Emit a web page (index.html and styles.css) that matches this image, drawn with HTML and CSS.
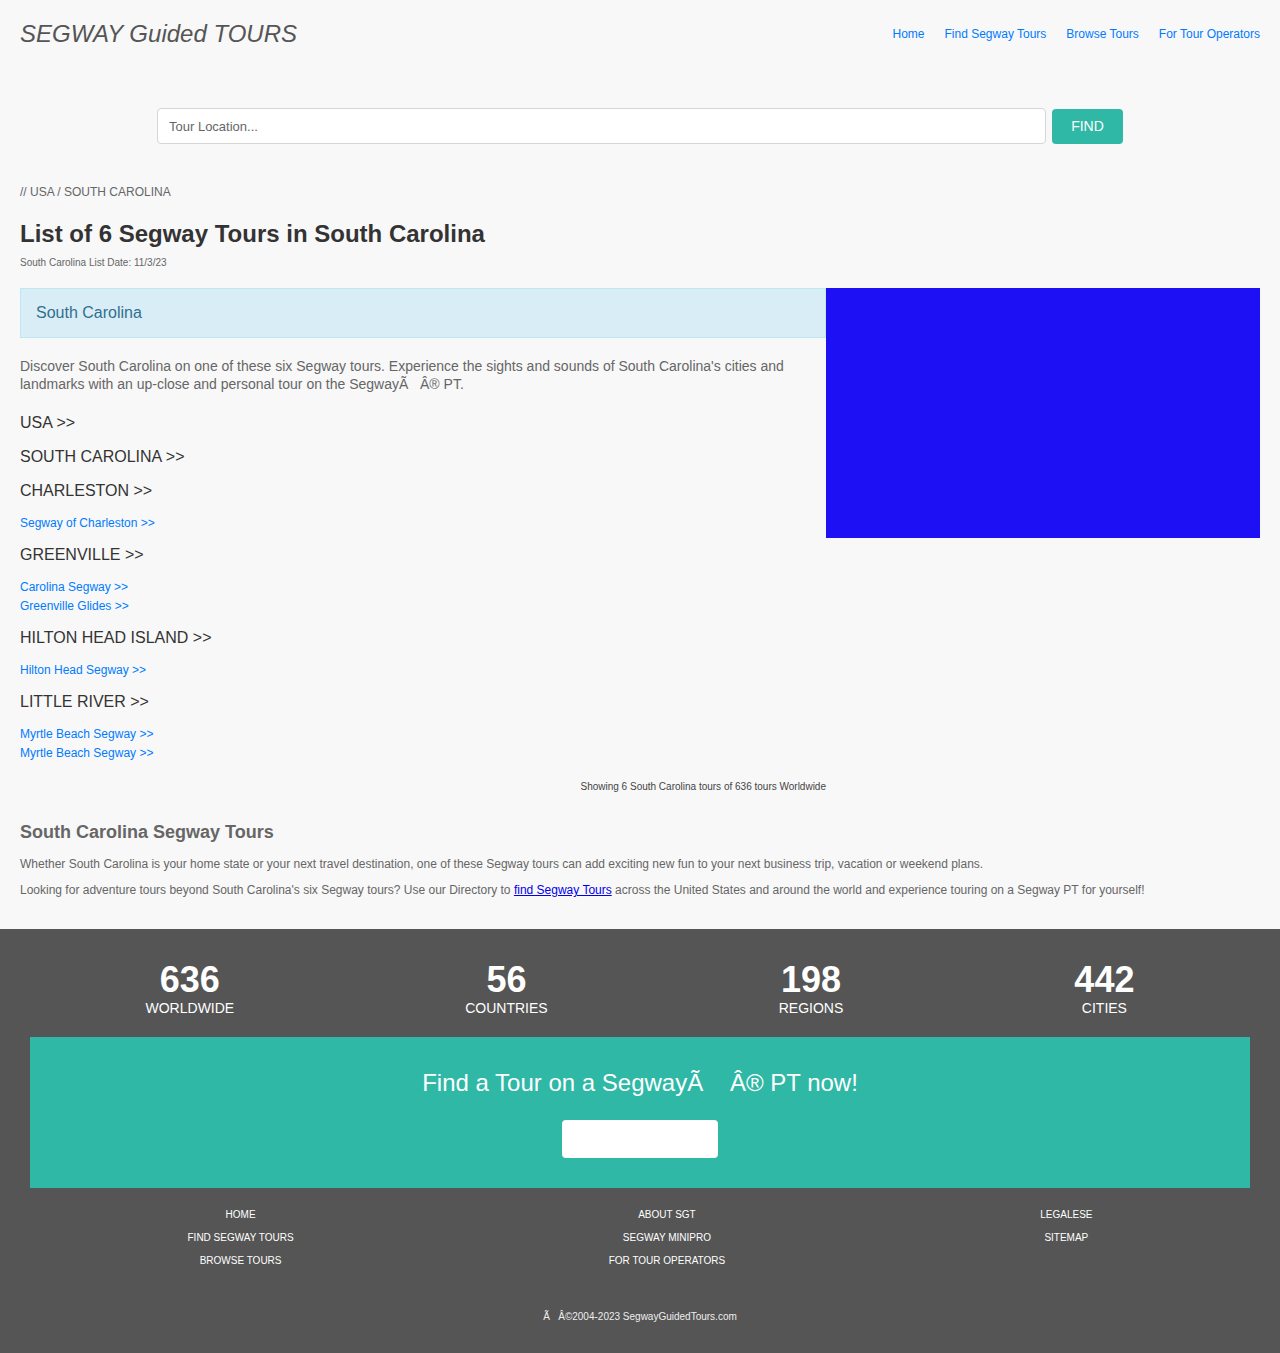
FILE: index.html
```html
<!DOCTYPE html>
<html>
<head>
<meta charset="utf-8">
<title>Segway Tours in South Carolina</title>
<link rel="stylesheet" href="styles.css">
</head>
<body>
<header class="site-header">
  <div class="logo">SEGWAY Guided TOURS</div>
  <nav class="main-nav">
    <a href="#">Home</a>
    <a href="#">Find Segway Tours</a>
    <a href="#">Browse Tours</a>
    <a href="#">For Tour Operators</a>
  </nav>
</header>

<div class="search">
  <input class="search-input" type="text" placeholder="Tour Location...">
  <button class="search-btn">FIND</button>
</div>

<main class="content">
  <div class="breadcrumb">// USA / SOUTH CAROLINA</div>
  <h1 class="title">List of 6 Segway Tours in South Carolina</h1>
  <div class="list-date">South Carolina List Date: 11/3/23</div>

  <div class="row">
    <div class="left-col">
      <div class="alert">South Carolina</div>
      <p class="intro">Discover South Carolina on one of these six Segway tours. Experience the sights and sounds of South Carolina's cities and landmarks with an up-close and personal tour on the SegwayÃ&nbsp;&nbsp;&nbsp;Â® PT.</p>
      <div class="loc">USA &gt;&gt;</div>
      <div class="loc">SOUTH CAROLINA &gt;&gt;</div>
      <div class="loc">CHARLESTON &gt;&gt;</div>
      <ul class="tours">
        <li><a href="#">Segway of Charleston &gt;&gt;</a></li>
      </ul>
      <div class="loc">GREENVILLE &gt;&gt;</div>
      <ul class="tours">
        <li><a href="#">Carolina Segway &gt;&gt;</a></li>
        <li><a href="#">Greenville Glides &gt;&gt;</a></li>
      </ul>
      <div class="loc">HILTON HEAD ISLAND &gt;&gt;</div>
      <ul class="tours">
        <li><a href="#">Hilton Head Segway &gt;&gt;</a></li>
      </ul>
      <div class="loc">LITTLE RIVER &gt;&gt;</div>
      <ul class="tours">
        <li><a href="#">Myrtle Beach Segway &gt;&gt;</a></li>
        <li><a href="#">Myrtle Beach Segway &gt;&gt;</a></li>
      </ul>
      <div class="showing">Showing 6 South Carolina tours of 636 tours Worldwide</div>
    </div>
    <div class="right-col">
      <div class="ad-box"></div>
    </div>
  </div>

  <h2 class="sub-title">South Carolina Segway Tours</h2>
  <p class="body-text">Whether South Carolina is your home state or your next travel destination, one of these Segway tours can add exciting new fun to your next business trip, vacation or weekend plans.</p>
  <p class="body-text">Looking for adventure tours beyond South Carolina's six Segway tours? Use our Directory to <a class="inline-link" href="#">find Segway Tours</a> across the United States and around the world and experience touring on a Segway PT for yourself!</p>
</main>

<footer class="site-footer">
  <div class="stats">
    <div class="stat"><div class="stat-num">636</div><div class="stat-label">WORLDWIDE</div></div>
    <div class="stat"><div class="stat-num">56</div><div class="stat-label">COUNTRIES</div></div>
    <div class="stat"><div class="stat-num">198</div><div class="stat-label">REGIONS</div></div>
    <div class="stat"><div class="stat-num">442</div><div class="stat-label">CITIES</div></div>
  </div>
  <div class="cta">
    <div class="cta-title">Find a Tour on a SegwayÃ&nbsp;&nbsp;&nbsp;&nbsp;Â® PT now!</div>
    <button class="cta-btn"></button>
  </div>
  <div class="foot-links">
    <ul class="foot-col">
      <li><a href="#">HOME</a></li>
      <li><a href="#">FIND SEGWAY TOURS</a></li>
      <li><a href="#">BROWSE TOURS</a></li>
    </ul>
    <ul class="foot-col">
      <li><a href="#">ABOUT SGT</a></li>
      <li><a href="#">SEGWAY MINIPRO</a></li>
      <li><a href="#">FOR TOUR OPERATORS</a></li>
    </ul>
    <ul class="foot-col">
      <li><a href="#">LEGALESE</a></li>
      <li><a href="#">SITEMAP</a></li>
    </ul>
  </div>
  <div class="copyright">Ã&nbsp;&nbsp;&nbsp;Â©2004-2023 SegwayGuidedTours.com</div>
</footer>
</body>
</html>
```

FILE: styles.css
```css
* { box-sizing: border-box; }

body {
  margin: 0;
  background: #f8f8f8;
  font-family: "Liberation Sans", Arial, Helvetica, sans-serif;
  color: #666;
}

a { text-decoration: none; }

.site-header {
  display: flex;
  justify-content: space-between;
  align-items: flex-start;
  padding: 19px 20px 0;
  height: 68px;
}

.logo {
  font-size: 24px;
  font-style: italic;
  color: #555;
  line-height: 30px;
}

.main-nav {
  display: flex;
  gap: 20px;
  padding-top: 8px;
}

.main-nav a {
  font-size: 12px;
  color: #007bff;
  line-height: 15px;
}

.search {
  display: flex;
  justify-content: center;
  align-items: center;
  gap: 6px;
  margin-top: 40px;
}

.search-input {
  width: 889px;
  height: 36px;
  border: 1px solid #d6d6d6;
  border-radius: 4px;
  background: #fff;
  padding: 0 11px;
  font-family: "Liberation Sans", Arial, sans-serif;
  font-size: 13px;
  color: #555;
}

.search-input::placeholder { color: #666; }

.search-btn {
  width: 71px;
  height: 35px;
  border: none;
  border-radius: 4px;
  background: #2eb8a5;
  color: #fff;
  font-family: "Liberation Sans", Arial, sans-serif;
  font-size: 14px;
}

.content {
  padding: 0 20px;
}

.breadcrumb {
  margin-top: 41px;
  font-size: 12px;
  line-height: 14px;
  color: #666;
}

.title {
  margin: 21px 0 0;
  font-size: 24px;
  line-height: 28px;
  font-weight: bold;
  color: #333;
}

.list-date {
  margin-top: 9px;
  font-size: 10px;
  line-height: 12px;
  color: #666;
}

.row {
  display: flex;
  margin-top: 19px;
}

.left-col {
  width: 806px;
  flex: none;
}

.right-col {
  flex: 1;
}

.ad-box {
  height: 250px;
  background: #1e10f5;
}

.alert {
  height: 50px;
  padding: 0 15px;
  display: flex;
  align-items: center;
  background: #d9edf7;
  border: 1px solid #bce8f1;
  color: #31708f;
  font-size: 16px;
}

.intro {
  margin: 19px 0 0;
  font-size: 14px;
  line-height: 18px;
  color: #666;
}

.loc {
  font-size: 16px;
  line-height: 18px;
  color: #333;
  margin-top: 16px;
}

.intro + .loc { margin-top: 21px; }

.tours {
  list-style: none;
  margin: 14px 0 0;
  padding: 0;
}

.tours li {
  font-size: 12px;
  line-height: 19px;
}

.tours a { color: #007bff; }

.tours + .loc { margin-top: 13px; }

.showing {
  text-align: right;
  font-size: 10px;
  line-height: 12px;
  color: #444;
  margin-top: 18px;
}

.sub-title {
  margin: 28px 0 0;
  font-size: 18px;
  line-height: 22px;
  font-weight: bold;
  color: #666;
}

.body-text {
  margin: 14px 0 0;
  font-size: 12px;
  line-height: 14px;
  color: #666;
}

.body-text + .body-text { margin-top: 12px; }

.inline-link {
  color: #00e;
  text-decoration: underline;
}

.site-footer {
  margin-top: 32px;
  background: #555;
  padding: 32px 30px 30px;
  color: #fff;
}

.stats {
  display: flex;
  justify-content: space-around;
}

.stat { text-align: center; }

.stat-num {
  font-size: 36px;
  font-weight: bold;
  line-height: 38px;
}

.stat-label {
  font-size: 14px;
  line-height: 16px;
  margin-top: 1px;
}

.cta {
  margin-top: 21px;
  background: #2eb8a5;
  height: 151px;
  padding-top: 32px;
  text-align: center;
}

.cta-title {
  font-size: 24px;
  line-height: 28px;
  color: #fff;
}

.cta-btn {
  display: block;
  margin: 23px auto 0;
  width: 156px;
  height: 38px;
  border: none;
  border-radius: 4px;
  background: #fff;
}

.foot-links {
  display: flex;
  justify-content: space-around;
  margin-top: 21px;
}

.foot-col {
  list-style: none;
  margin: 0;
  padding: 0;
  text-align: center;
}

.foot-col li {
  font-size: 10px;
  line-height: 12px;
  margin-bottom: 11px;
}

.foot-col a { color: #fff; }

.copyright {
  text-align: center;
  font-size: 10px;
  line-height: 12px;
  color: #eee;
  margin-top: 33px;
}
```
